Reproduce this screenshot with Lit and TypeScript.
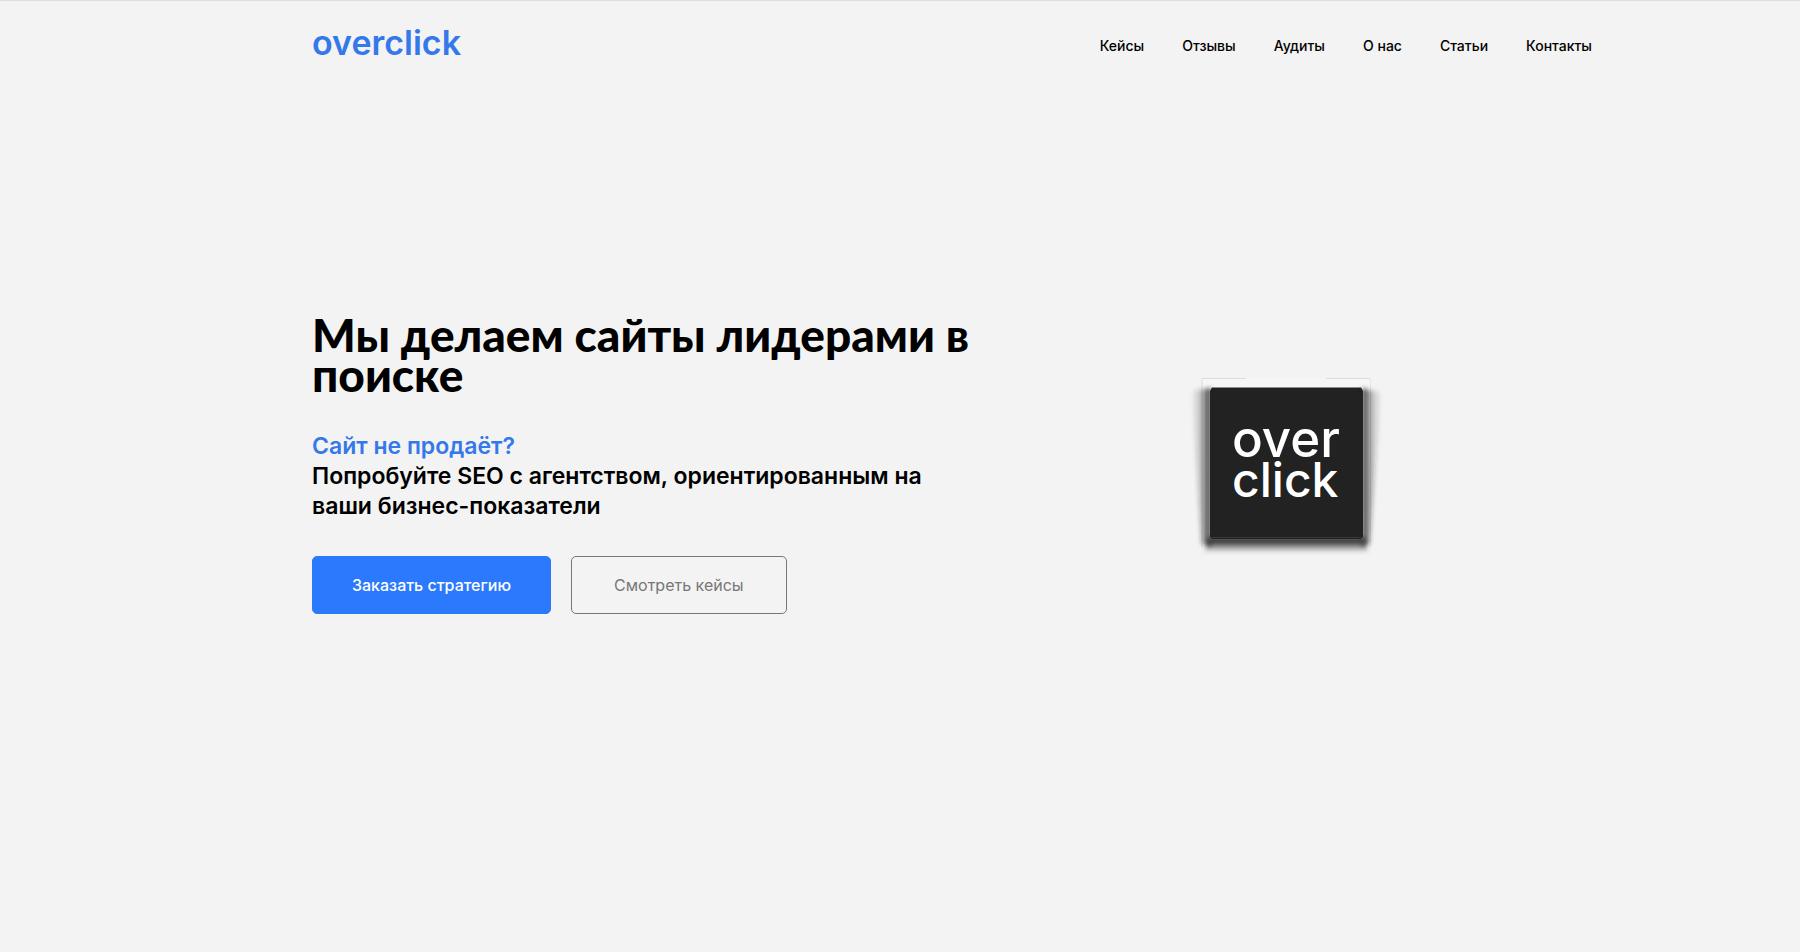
import { LitElement, html, css, svg } from "lit";
import { customElement } from "lit/decorators.js";

const NAV = ["Кейсы", "Отзывы", "Аудиты", "О нас", "Статьи", "Контакты"];

@customElement("overclick-cube")
class OverclickCube extends LitElement {
  static styles = css`
    :host { display: block; width: 230px; max-width: 100%; }
    .cube { display: block; width: 100%; height: auto; overflow: visible; }
    .word { font-family: Inter, sans-serif; font-weight: 500; fill: #fff; }
    .over { font-size: 51px; }
    .click { font-size: 48px; }
  `;

  render() {
    return html`<svg class="cube" viewBox="0 0 230 210" role="img" aria-label="over click">
      ${svg`
      <defs>
        <filter id="edge" x="-20%" y="-20%" width="140%" height="140%"><feGaussianBlur stdDeviation="2"/></filter>
        <linearGradient id="left" x1="0" x2="1" y1="0" y2="0">
          <stop offset="0" stop-color="#222" stop-opacity="0"/>
          <stop offset="0.5" stop-color="#222" stop-opacity="0.28"/>
          <stop offset="1" stop-color="#222" stop-opacity="0.9"/>
        </linearGradient>
        <linearGradient id="right" x1="1" x2="0" y1="0" y2="0">
          <stop offset="0" stop-color="#222" stop-opacity="0"/>
          <stop offset="0.5" stop-color="#222" stop-opacity="0.28"/>
          <stop offset="1" stop-color="#222" stop-opacity="0.85"/>
        </linearGradient>
        <linearGradient id="bottom" x1="0" x2="0" y1="0" y2="1">
          <stop offset="0" stop-color="#222"/>
          <stop offset="0.4" stop-color="#333" stop-opacity="0.85"/>
          <stop offset="1" stop-color="#444" stop-opacity="0.05"/>
        </linearGradient>
      </defs>
      <rect x="32" y="18" width="169" height="171" fill="#f6f6f6"/>
      <path d="M32 187V18.500H76M156 18.500H200" fill="none" stroke="#dcdcdc"/>
      <path d="M200.500 19V187" fill="none" stroke="#e4e4e4"/>
      <path d="M22 31L41 28V186L31 184Z" fill="url(#left)" filter="url(#edge)"/>
      <path d="M211 33L192 28V186L200 184Z" fill="url(#right)" filter="url(#edge)"/>
      <path d="M39 177H194L198 192H34Z" fill="url(#bottom)" filter="url(#edge)"/>
      <path d="M42 27.500H191L193 31V177L191 179H42L40 177V31Z" fill="#222"/>
      <path d="M42 177.500H191" stroke="#3a3a3a"/>
      `}
      <text class="word over" x="62" y="97">over</text>
      <text class="word click" x="62" y="137">click</text>
    </svg>`;
  }
}

@customElement("app-root")
class AppRoot extends LitElement {
  static styles = css`
    :host {
      display: block;
      font-family: Inter, sans-serif;
      color: #000;
      background: #f3f3f3;
    }
    .page {
      box-sizing: border-box;
      min-height: 100vh;
      border-top: 1px solid #dedede;
      display: grid;
      grid-template-columns: minmax(24px, 3fr) minmax(0, 1280px) minmax(24px, 2fr);
      grid-template-rows: auto 1fr;
    }
    .header {
      grid-column: 2;
      padding: 20px 0 24px;
      display: flex;
      align-items: flex-end;
      justify-content: space-between;
    }
    .logo {
      font-size: 34px;
      line-height: 44px;
      font-weight: 600;
      color: #3478ea;
      text-decoration: none;
    }
    .nav { display: flex; gap: 38px; padding-bottom: 9px; }
    .link {
      font-size: 14px;
      line-height: 20px;
      font-weight: 500;
      color: #000;
      text-decoration: none;
    }
    .hero {
      grid-column: 2;
      display: grid;
      grid-template-columns: 13fr 12fr;
      align-items: center;
      padding-bottom: 112px;
    }
    .title {
      margin: 0;
      font-family: Lato, sans-serif;
      font-size: 46px;
      line-height: 40px;
      font-weight: 900;
    }
    .lead {
      margin: 36px 0 35px;
      font-size: 23px;
      line-height: 30px;
      font-weight: 600;
    }
    .accent { display: block; color: #3478ea; }
    .actions { display: flex; gap: 20px; }
    .button {
      box-sizing: border-box;
      height: 58px;
      padding: 0 42px;
      border: 1px solid #777;
      border-radius: 5px;
      background: transparent;
      color: #777;
      font: 400 16px/24px Inter, sans-serif;
      cursor: pointer;
    }
    .primary {
      padding: 0 39px;
      border-color: #2b79fc;
      background: #2b79fc;
      color: #fff;
      font-weight: 500;
    }
    .visual { display: flex; justify-content: center; }
  `;

  render() {
    return html`
      <div class="page">
        <header class="header">
          <a class="logo" href="#">overclick</a>
          <nav class="nav">${NAV.map((n) => html`<a class="link" href="#">${n}</a>`)}</nav>
        </header>
        <main class="hero">
          <section>
            <h1 class="title">Мы делаем сайты лидерами в поиске</h1>
            <p class="lead">
              <span class="accent">Сайт не продаёт?</span>
              Попробуйте SEO с агентством, ориентированным на ваши бизнес-показатели
            </p>
            <div class="actions">
              <button class="button primary" type="button">Заказать стратегию</button>
              <button class="button" type="button">Смотреть кейсы</button>
            </div>
          </section>
          <div class="visual"><overclick-cube></overclick-cube></div>
        </main>
      </div>
    `;
  }
}
